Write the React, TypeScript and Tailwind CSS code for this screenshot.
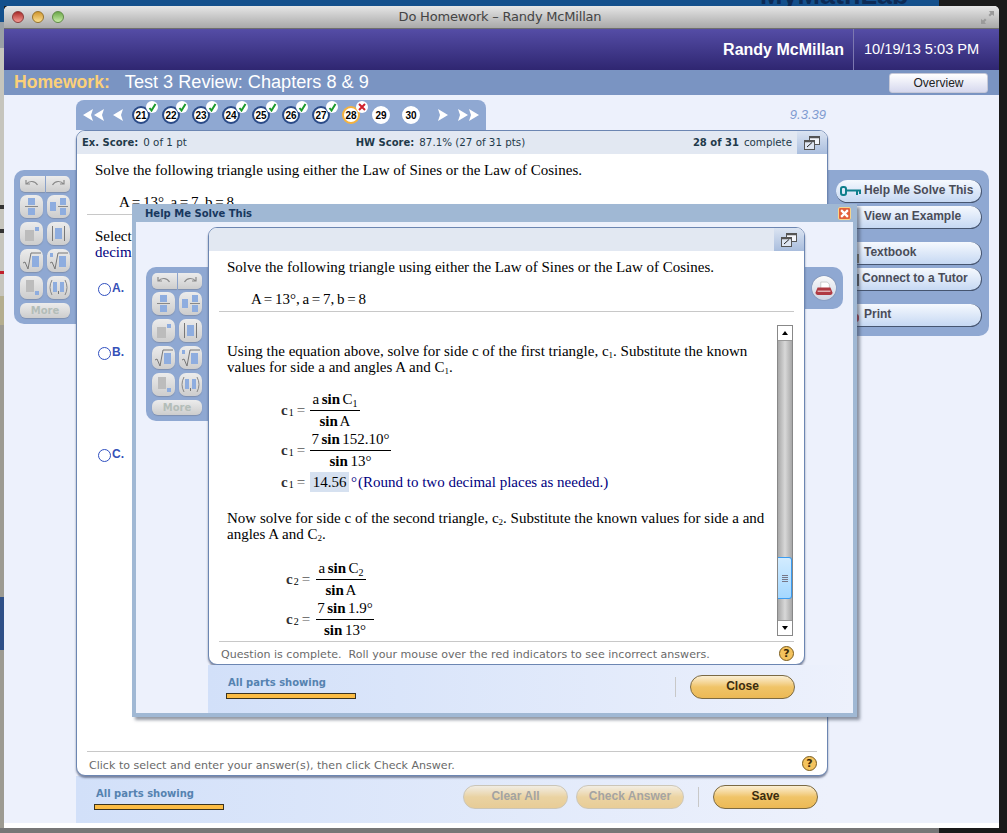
import React from 'react';

const sans = "font-['Liberation_Sans',Arial,sans-serif]";
const verdana = "font-['DejaVu_Sans',Verdana,sans-serif]";
const serif = "font-['Liberation_Serif','Times_New_Roman',serif]";

const blue = '#8eaddf';
const grey = '#bcbcbc';

// math tool glyphs, they are all little block drawings
function ToolIcon({ name }: { name: string }) {
  return (
    <svg width="23" height="23" viewBox="0 0 23 23">
      {name === 'frac' && (
        <>
          <rect x="8" y="3" width="7" height="7" fill={blue} />
          <rect x="5" y="11" width="13" height="1" fill="#888" />
          <rect x="8" y="13" width="7" height="7" fill={blue} />
        </>
      )}
      {name === 'mixed' && (
        <>
          <rect x="3" y="7" width="6" height="9" fill={blue} />
          <rect x="13" y="3" width="6" height="7" fill={blue} />
          <rect x="11" y="11" width="10" height="1" fill="#888" />
          <rect x="13" y="13" width="6" height="7" fill={blue} />
        </>
      )}
      {name === 'pow' && (
        <>
          <rect x="5" y="8" width="9" height="11" fill={grey} />
          <rect x="15" y="5" width="4" height="4" fill={blue} />
        </>
      )}
      {name === 'abs' && (
        <>
          <rect x="5" y="4" width="1" height="15" fill="#777" />
          <rect x="8" y="6" width="7" height="11" fill={blue} />
          <rect x="17" y="4" width="1" height="15" fill="#777" />
        </>
      )}
      {name === 'sqrt' && (
        <>
          <path d="M3 14 l2 -1 l3 7 l3 -16 h10" fill="none" stroke="#777" strokeWidth="1" />
          <rect x="12" y="7" width="7" height="11" fill={blue} />
        </>
      )}
      {name === 'root' && (
        <>
          <rect x="3" y="4" width="3" height="4" fill={blue} />
          <path d="M3 14 l2 -1 l3 7 l3 -16 h10" fill="none" stroke="#777" strokeWidth="1" />
          <rect x="12" y="7" width="7" height="11" fill={blue} />
        </>
      )}
      {name === 'sub' && (
        <>
          <rect x="6" y="4" width="8" height="12" fill={grey} />
          <rect x="15" y="15" width="4" height="4" fill={blue} />
        </>
      )}
      {name === 'pair' && (
        <>
          <path d="M5 4 q-4 7.500 0 15 M18 4 q4 7.500 0 15" fill="none" stroke="#888" strokeWidth="1" />
          <rect x="6" y="6" width="4" height="10" fill={blue} />
          <rect x="13" y="6" width="4" height="10" fill={blue} />
          <rect x="11" y="15" width="1" height="3" fill="#777" />
        </>
      )}
    </svg>
  );
}

function ToolButton({ name }: { name: string }) {
  return (
    <div className="w-[23px] h-[23px] rounded-[7px] bg-gradient-to-b from-[#ececec] to-[#cdcdcd] shadow-[0_1px_1px_#7f8fae]">
      <ToolIcon name={name} />
    </div>
  );
}

function ToolsPanel() {
  return (
    <div className="w-[62px] h-[154px] shrink-0 bg-[#8fa8d2] rounded-l-[10px] pl-[6px] pt-[6px]">
      <div className="flex w-[50px] h-[16px] gap-px">
        <div className="flex-1 rounded-l-[5px] bg-gradient-to-b from-[#ececec] to-[#cdcdcd] shadow-[0_1px_1px_#7f8fae] flex items-center justify-center">
          <svg width="14" height="10" viewBox="0 0 14 10" fill="none" stroke="#8a8a8a" strokeWidth="1.200">
            <path d="M1 1v4h4M1.500 5 C4 1.500 10 1.500 12.500 6" />
          </svg>
        </div>
        <div className="flex-1 rounded-r-[5px] bg-gradient-to-b from-[#ececec] to-[#cdcdcd] shadow-[0_1px_1px_#7f8fae] flex items-center justify-center">
          <svg width="14" height="10" viewBox="0 0 14 10" fill="none" stroke="#8a8a8a" strokeWidth="1.200">
            <path d="M13 1v4h-4M12.500 5 C10 1.500 4 1.500 1.500 6" />
          </svg>
        </div>
      </div>
      <div className="grid grid-cols-[23px_23px] gap-x-[4px] gap-y-[4px] mt-[3px]">
        <ToolButton name="frac" />
        <ToolButton name="mixed" />
        <ToolButton name="pow" />
        <ToolButton name="abs" />
        <ToolButton name="sqrt" />
        <ToolButton name="root" />
        <ToolButton name="sub" />
        <ToolButton name="pair" />
      </div>
      <div className={`mt-[4px] w-[50px] h-[15px] rounded-[6px] bg-gradient-to-b from-[#ececec] to-[#cdcdcd] shadow-[0_1px_1px_#7f8fae] text-center text-[10px] leading-[15px] font-bold text-[#b3bdb8] ${verdana}`}>
        More
      </div>
    </div>
  );
}

function NavArrow({ dir, double }: { dir: 'left' | 'right'; double?: boolean }) {
  return (
    <svg width={double ? 21 : 11} height="12" viewBox={double ? '0 0 21 12' : '0 0 11 12'} fill="white" className={`shrink-0 ${dir === 'right' ? 'rotate-180' : ''}`}>
      <path d="M0 6 L10 0 L8 6 L10 12 Z" />
      {double && <path d="M11 6 L21 0 L19 6 L21 12 Z" />}
    </svg>
  );
}

function Question({ n, state }: { n: number; state?: 'ok' | 'bad' }) {
  const ring = state === 'ok' ? 'border-[#2a4a87]' : state === 'bad' ? 'border-[#f5b23d]' : 'border-white';
  return (
    <div className="relative w-[30px] h-[18px] shrink-0 flex justify-center">
      <div className={`w-[18px] h-[18px] rounded-full bg-white border-[2px] ${ring} flex items-center justify-center text-[10px] font-bold text-black ${sans}`}>
        {n}
      </div>
      {state && (
        <div className="absolute left-[20px] top-[-5px] w-[12px] h-[12px] rounded-full bg-white flex items-center justify-center">
          {state === 'ok' ? (
            <svg width="9" height="9" viewBox="0 0 9 9" fill="none" stroke="#1c9a2c" strokeWidth="2">
              <path d="M1.500 5 L3.500 7.500 L7.500 1" />
            </svg>
          ) : (
            <svg width="8" height="8" viewBox="0 0 8 8" fill="none" stroke="#d0202c" strokeWidth="2">
              <path d="M1 1 L7 7 M7 1 L1 7" />
            </svg>
          )}
        </div>
      )}
    </div>
  );
}

function ExpandIcon() {
  return (
    <svg width="16" height="14" viewBox="0 0 16 14" fill="none" stroke="#555">
      <rect x="5.500" y="0.500" width="10" height="8" fill="#f4f6fb" />
      <rect x="0.500" y="4.500" width="10" height="9" fill="#dfe6f2" />
      <path d="M3 11 L8 6.500" stroke="#222" />
      <path d="M5.500 1.500h10M0.500 5.500h10" strokeWidth="1.500" />
    </svg>
  );
}

function HelpIcon() {
  return (
    <div className={`w-[15px] h-[15px] rounded-full bg-[#f4c35e] border border-[#7a5c1e] text-center text-[11px] leading-[13px] font-bold text-[#3a2a08] ${verdana}`}>
      ?
    </div>
  );
}

function SideButton({ label, icon, textLeft = 'pl-[28px]' }: { label: string; icon?: React.ReactNode; textLeft?: string }) {
  return (
    <div className={`relative h-[23px] w-[146px] rounded-full bg-gradient-to-b from-[#f6f9fe] to-[#c6d8f3] border-b-[1.500px] border-r-[1.500px] border-[#465570] ${textLeft} text-[12px] leading-[21px] font-bold text-[#4a4c58] ${sans}`}>
      {icon}
      {label}
    </div>
  );
}

function GoldButton({ label, faded, w }: { label: string; faded?: boolean; w: string }) {
  return (
    <div className={`${w} h-[24px] rounded-full border border-[#7b6a44] bg-gradient-to-b from-[#fbefd3] via-[#f0c468] to-[#ecb955] text-center text-[12px] leading-[21px] font-bold text-[#3a2c10] ${sans} ${faded ? 'opacity-60 !text-[#7a7468] !border-[#bcae8c]' : ''}`}>
      {label}
    </div>
  );
}

function PartsBar() {
  return (
    <div>
      <div className={`text-[10px] leading-[14px] font-bold text-[#5582b0] ${verdana}`}>All parts showing</div>
      <div className="mt-[3px] -ml-[2px] w-[130px] h-[6px] bg-[#fbbc44] border border-[#3a3320]" />
    </div>
  );
}

function Label({ sub, w }: { sub: string; w: string }) {
  return (
    <div className={`${w} shrink-0 flex items-center`}>
      <span className="font-bold text-[#333]">c</span>
      <sub className="text-[10px] ml-[1px]">{sub}</sub>
      <span className="ml-[3px] text-[#555]">=</span>
    </div>
  );
}

// c1 = a/b style fraction row
function Frac({ sub, top, bottom, width, ml, labelW }: { sub: string; top: React.ReactNode; bottom: React.ReactNode; width: string; ml: string; labelW: string }) {
  return (
    <div className={`flex items-center ${ml}`}>
      <Label sub={sub} w={labelW} />
      <div className={`${width} text-center leading-[16px] whitespace-nowrap [word-spacing:-1.200px]`}>
        <div className="border-b border-black pb-[3px]">{top}</div>
        <div className="pt-[2px]">{bottom}</div>
      </div>
    </div>
  );
}

function Scrollbar() {
  return (
    <div className="w-[16px] h-[311px] shrink-0 flex flex-col border border-[#888] bg-gradient-to-r from-[#a8a8a8] via-[#d8d8d8] to-[#a8a8a8]">
      <div className="h-[15px] bg-white border-b border-[#999] flex items-center justify-center">
        <div className="w-0 h-0 border-x-[3.500px] border-x-transparent border-b-[4px] border-b-black" />
      </div>
      <div className="flex-1 relative">
        <div className="absolute left-0 right-0 top-[216px] h-[42px] rounded-r-[3px] bg-gradient-to-b from-[#d2ecff] to-[#a4d8ff] border border-l-0 border-[#3b9cf0] flex flex-col items-center justify-center gap-px">
          <div className="w-[6px] h-px bg-[#778]" />
          <div className="w-[6px] h-px bg-[#778]" />
          <div className="w-[6px] h-px bg-[#778]" />
          <div className="w-[6px] h-px bg-[#778]" />
        </div>
      </div>
      <div className="h-[15px] bg-white border-t border-[#999] flex items-center justify-center">
        <div className="w-0 h-0 border-x-[3.500px] border-x-transparent border-t-[4px] border-t-black" />
      </div>
    </div>
  );
}

function HelpModal() {
  return (
    <div className="absolute left-[128px] top-[109px] w-[725px] h-[513px] flex flex-col bg-[#a0b8d4] shadow-[3px_3px_3px_rgba(60,70,90,0.55)]">
      <div className="h-[18px] shrink-0 flex items-center justify-between pl-[13px] pr-[6px]">
        <span className={`text-[10px] font-bold text-[#17375e] ${verdana}`}>Help Me Solve This</span>
        <div className="w-[13px] h-[13px] rounded-[2px] bg-[#e2603a] border border-[#f6d58c] flex items-center justify-center">
          <svg width="9" height="9" viewBox="0 0 8 8" fill="none" stroke="white" strokeWidth="2">
            <path d="M1 1 L7 7 M7 1 L1 7" />
          </svg>
        </div>
      </div>
      <div className="relative flex-1 mx-[4px] mb-[4px] bg-[#edf1fc]">
        <div className="absolute left-[10px] top-[45px]">
          <ToolsPanel />
        </div>
        <div className="absolute left-[669px] top-[45px] w-[38px] h-[42px] bg-[#8fa8d2] rounded-r-[10px] flex items-center pl-[7px]">
          <div className="w-[24px] h-[24px] rounded-full bg-gradient-to-b from-[#fafafa] to-[#cfd6e4] shadow-[0_0_1px_#445] flex items-center justify-center">
            <svg width="18" height="15" viewBox="0 0 16 14">
              <path d="M5 1 h6 l2 2 v4 h-8 z" fill="#fff" stroke="#aaa" strokeWidth="0.500" />
              <path d="M2 6 h12 l2 5 q0 2 -2 2 h-12 q-2 0 -2 -2 z" fill="#b03a42" />
              <rect x="2" y="9" width="12" height="1" fill="#f2dcdc" />
            </svg>
          </div>
        </div>

        {/* inner card */}
        <div className="absolute left-[72px] top-[5px] w-[597px] h-[438px] bg-white rounded-[9px] border border-[#6c86b2] shadow-[0_2px_2px_rgba(60,70,100,0.6)] flex flex-col overflow-hidden">
          <div className="h-[23px] shrink-0 flex justify-end bg-[#e2e8f2]">
            <div className="w-[30px] bg-gradient-to-b from-[#dbe4f2] to-[#a9bddd] flex items-center justify-center">
              <ExpandIcon />
            </div>
          </div>
          <div className={`text-[15px] leading-[16px] text-black ${serif}`}>
            <div className="pl-[18px] pt-[8px]">Solve the following triangle using either the Law of Sines or the Law of Cosines.</div>
            <div className="pl-[32px] pt-[16px] h-[37px] mx-[10px] border-b border-[#c8c8c8] [word-spacing:-1px]">A = 13°, a = 7, b = 8</div>
            <div className="flex mt-[13px] pr-[11px]">
              <div className="flex-1 h-[311px] overflow-hidden pl-[18px] pr-[10px] pt-[18px]">
                <div className="w-[535px]">
                  Using the equation above, solve for side c of the first triangle, c<sub className="text-[9px]">1</sub>. Substitute the known values for side a and angles A and C<sub className="text-[9px]">1</sub>.
                </div>
                <div className="mt-[16px] flex flex-col gap-[2px]">
                  <Frac ml="ml-[54px]" labelW="w-[29px]" sub="1" width="w-[50px]" top={<>a <b>sin</b> C<sub className="text-[10px]">1</sub></>} bottom={<><b>sin</b> A</>} />
                  <Frac ml="ml-[54px]" labelW="w-[29px]" sub="1" width="w-[81px]" top={<>7 <b>sin</b> 152.10°</>} bottom={<><b>sin</b> 13°</>} />
                  <div className="flex items-center ml-[54px] mt-[1px]">
                    <Label sub="1" w="w-[29px]" />
                    <span className="w-[39px] h-[20px] text-center leading-[20px] bg-[#d6e1f0]">14.56</span>
                    <span className="ml-[2px] text-[#000080]">°</span>
                    <span className="ml-[1px] text-[#000080]">(Round to two decimal places as needed.)</span>
                  </div>
                </div>
                <div className="mt-[18px] w-[540px]">
                  Now solve for side c of the second triangle, c<sub className="text-[9px]">2</sub>. Substitute the known values for side a and angles A and C<sub className="text-[9px]">2</sub>.
                </div>
                <div className="mt-[18px] flex flex-col gap-[2px]">
                  <Frac ml="ml-[59px]" labelW="w-[30px]" sub="2" width="w-[50px]" top={<>a <b>sin</b> C<sub className="text-[10px]">2</sub></>} bottom={<><b>sin</b> A</>} />
                  <Frac ml="ml-[59px]" labelW="w-[30px]" sub="2" width="w-[58px]" top={<>7 <b>sin</b> 1.9°</>} bottom={<><b>sin</b> 13°</>} />
                </div>
              </div>
              <Scrollbar />
            </div>
          </div>
          <div className={`mt-auto mx-[10px] h-[23px] border-t border-[#c8c8c8] flex items-center justify-between pl-[2px] text-[11.070px] text-[#6a6a6a] whitespace-nowrap ${verdana}`}>
            <span className="pt-[5px]">Question is complete.&nbsp; Roll your mouse over the red indicators to see incorrect answers.</span>
            <HelpIcon />
          </div>
        </div>

        {/* bottom band */}
        <div className="absolute left-[72px] right-0 top-[443px] bottom-0 bg-gradient-to-r from-[#d2e0f9] to-[#edf1fc] pl-[20px] pt-[11px] flex justify-between">
          <PartsBar />
          <div className="flex items-center h-[24px] -mt-[1px] mr-[58px]">
            <div className="w-px h-[20px] bg-[#c8c8c8] mr-[14px]" />
            <GoldButton label="Close" w="w-[105px]" />
          </div>
        </div>
      </div>
    </div>
  );
}

function Choice({ label, gap = '' }: { label: string; gap?: string }) {
  return (
    <div className={`flex items-center gap-[1px] h-[16px] ${gap}`}>
      <div className="w-[13px] h-[13px] rounded-full border border-[#2f4fc0] bg-white" />
      <span className={`text-[12px] font-bold text-[#3550b8] -mt-[2px] ${sans}`}>{label}</span>
    </div>
  );
}

export default function App() {
  return (
    <div className="relative w-[1007px] h-[833px] overflow-hidden bg-[#1a1a1a]">
      {/* desktop behind the window */}
      <div className="absolute left-0 top-0 w-[939px] h-[6px] bg-[#14508c]" />
      <div className={`absolute left-[760px] top-[-15px] text-[27px] leading-[20px] font-bold text-[#0d2a55] ${sans}`}>MyMathLab</div>
      <div className="absolute left-0 top-[6px] w-[4px] h-[827px] flex flex-col">
        <div className="h-[16px] bg-[#14508c]" />
        <div className="h-[26px] bg-[#9aa0a6]" />
        <div className="h-[157px] bg-[#c6c5bd]" />
        <div className="h-[4px] bg-[#333]" />
        <div className="h-[20px] bg-[#c6c5bd]" />
        <div className="h-[4px] bg-[#333]" />
        <div className="h-[38px] bg-[#c6c5bd]" />
        <div className="h-[3px] bg-[#c0202c]" />
        <div className="h-[22px] bg-[#c6c5bd]" />
        <div className="h-[29px] bg-[#b4ae8f]" />
        <div className="h-[272px] bg-[#9d9b92]" />
        <div className="h-[53px] bg-[#2f5088]" />
        <div className="flex-1 bg-[#9d9b92]" />
      </div>
      <div className="absolute left-0 top-[828px] w-[939px] h-[5px] bg-[#777]" />

      {/* browser window */}
      <div className="absolute left-[4px] top-[6px] w-[995px] h-[822px] bg-white rounded-t-[5px] overflow-hidden flex flex-col">
        <div className="h-[23px] shrink-0 relative flex items-center justify-center bg-gradient-to-b from-[#e6e6e6] to-[#a9a9a9] border-b border-[#6e6e6e]">
          <div className="absolute left-[8px] top-[5px] flex gap-[8px]">
            <div className="w-[12px] h-[12px] rounded-full border border-[#8a3a3a] bg-gradient-to-b from-[#a9272a] to-[#f59a94]" />
            <div className="w-[12px] h-[12px] rounded-full border border-[#96722a] bg-gradient-to-b from-[#d0962a] to-[#fbe08e]" />
            <div className="w-[12px] h-[12px] rounded-full border border-[#5f8a45] bg-gradient-to-b from-[#6ba848] to-[#c9eda8]" />
          </div>
          <span className={`text-[13px] text-[#444] mr-[3px] ${verdana} tracking-[-0.2px]`}>Do Homework – Randy McMillan</span>
          <svg className="absolute right-[4px] top-[4px]" width="15" height="15" viewBox="0 0 15 15" fill="#9a9a9a">
            <path d="M9 1 h5 v5 l-2 -1.500 l-2 2 l-1.500 -1.500 l2 -2 z M1 9 v5 h5 l-1.500 -2 l2 -2 l-1.500 -1.500 l-2 2 z" />
          </svg>
        </div>

        <div className={`h-[41px] shrink-0 flex items-center justify-end text-white bg-gradient-to-b from-[#554da6] to-[#2f2671] ${sans}`}>
          <span className="text-[16px] font-bold pr-[9px]">Randy McMillan</span>
          <div className="h-full w-px bg-[#7d78b0]" />
          <span className="text-[14.600px] w-[145px] pl-[10px]">10/19/13 5:03 PM</span>
        </div>

        <div className={`h-[25px] shrink-0 flex items-center bg-[#7a94c2] pl-[10px] pr-[11px] ${sans}`}>
          <span className="text-[17.600px] font-bold text-[#fbd078]">Homework:</span>
          <span className="text-[18.150px] text-white ml-[15px]">Test 3 Review: Chapters 8 &amp; 9</span>
          <div className="ml-auto w-[99px] h-[20px] rounded-[3px] border border-[#c5c8d8] bg-gradient-to-b from-[#ffffff] to-[#d6d8ee] text-center text-[12px] leading-[18px] text-[#222]">
            Overview
          </div>
        </div>

        {/* page body */}
        <div className="relative flex-1 flex items-start pl-[10px] bg-[#edf1fc]">
          <div className="mt-[75px]">
            <ToolsPanel />
          </div>
          <div className="w-[752px] shrink-0 mt-[5px]">
            <div className="flex items-center justify-between">
              <div className="w-[410px] h-[30px] bg-[#8fa8d2] rounded-t-[8px] flex items-center pl-[7px]">
                <NavArrow dir="left" double />
                <div className="ml-[9px] mr-[2px]"><NavArrow dir="left" /></div>
                {[21, 22, 23, 24, 25, 26, 27].map((n) => (
                  <Question key={n} n={n} state="ok" />
                ))}
                <Question n={28} state="bad" />
                <Question n={29} />
                <Question n={30} />
                <div className="ml-[11px] mr-[10px]"><NavArrow dir="right" /></div>
                <NavArrow dir="right" double />
              </div>
              <span className={`text-[13px] italic text-[#7f9bd0] mr-[2px] ${sans}`}>9.3.39</span>
            </div>

            {/* question card */}
            <div className="relative h-[646px] bg-white rounded-[9px] border border-[#6c86b2] shadow-[0_2px_2px_rgba(60,70,100,0.6)] overflow-hidden flex flex-col">
              <div className={`h-[23px] shrink-0 flex items-center bg-[#e2e8f2] pl-[5px] text-[10.300px] text-[#1f3a4a] ${verdana}`}>
                <b className="text-[10px]">Ex. Score:</b>
                <span className="ml-[5px]">0 of 1 pt</span>
                <b className="ml-[169px] text-[10px]">HW Score:</b>
                <span className="ml-[5px]">87.1% (27 of 31 pts)</span>
                <b className="ml-auto text-[10px]">28 of 31</b>
                <span className="ml-[5px] mr-[5px]">complete</span>
                <div className="w-[30px] h-full bg-gradient-to-b from-[#dbe4f2] to-[#a9bddd] flex items-center justify-center">
                  <ExpandIcon />
                </div>
              </div>
              <div className={`text-[15px] leading-[16px] text-black ${serif}`}>
                <div className="pl-[18px] pt-[8px]">Solve the following triangle using either the Law of Sines or the Law of Cosines.</div>
                <div className="pl-[32px] pt-[16px] h-[37px] mx-[10px] border-b border-[#c8c8c8] [word-spacing:-1px]">A = 13°, a = 7, b = 8</div>
                <div className="pl-[18px] pt-[13px]">Select the correct choice below and, if necessary, fill in the answer box.</div>
                <div className="pl-[18px] text-[#000080]">decimal places as needed.</div>
                <div className="pl-[21px] pt-[21px] flex flex-col">
                  <Choice label="A." />
                  <Choice label="B." gap="mt-[48px]" />
                  <Choice label="C." gap="mt-[86px]" />
                </div>
              </div>
              <div className={`mt-auto mx-[10px] h-[24px] border-t border-[#c8c8c8] flex items-center justify-between pl-[2px] text-[11.070px] text-[#6a6a6a] ${verdana}`}>
                <span className="pt-[5px]">Click to select and enter your answer(s), then click Check Answer.</span>
                <HelpIcon />
              </div>
            </div>

            {/* bottom band */}
            <div className="h-[47px] bg-gradient-to-r from-[#d2e0f9] to-[#edf1fc] pl-[20px] pt-[11px] flex justify-between">
              <PartsBar />
              <div className="flex items-center gap-[8px] h-[24px] -mt-[2px] mr-[10px]">
                <GoldButton label="Clear All" faded w="w-[105px]" />
                <GoldButton label="Check Answer" faded w="w-[108px]" />
                <div className="w-px h-[20px] bg-[#c8c8c8] mx-[6px]" />
                <GoldButton label="Save" w="w-[105px]" />
              </div>
            </div>
          </div>

          <div className="w-[161px] h-[166px] mt-[75px] shrink-0 bg-[#8fa8d2] rounded-r-[10px] pt-[10px] pl-[8px]">
            <SideButton
              label="Help Me Solve This"
              icon={
                <svg className="absolute left-[4px] top-[6px]" width="22" height="11" viewBox="0 0 22 11" fill="none" stroke="#0f7f8c" strokeWidth="2">
                  <rect x="1" y="1" width="5" height="8" rx="2" />
                  <path d="M6 4.500 H21 M17 4.500 V9 M20 4.500 V8" />
                </svg>
              }
            />
            <div className="mt-[3px]"><SideButton label="View an Example" /></div>
            <div className="mt-[13px]">
              <SideButton
                label="Textbook"
                icon={<div className="absolute left-[19px] top-[12px] w-[4px] h-[9px] bg-[#7b7460]" />}
              />
            </div>
            <div className="mt-[3px]">
              <SideButton
                label="Connect to a Tutor"
                textLeft="pl-[26px]"
                icon={<div className="absolute left-[19px] top-[6px] w-[4px] h-[12px] bg-[#555]" />}
              />
            </div>
            <div className="mt-[13px]">
              <SideButton
                label="Print"
                icon={<div className="absolute left-[17px] top-[10px] w-[6px] h-[8px] rounded-full bg-[#b03a42]" />}
              />
            </div>
          </div>

          <HelpModal />
        </div>
        <div className="h-[5px] shrink-0 bg-white" />
      </div>
    </div>
  );
}
